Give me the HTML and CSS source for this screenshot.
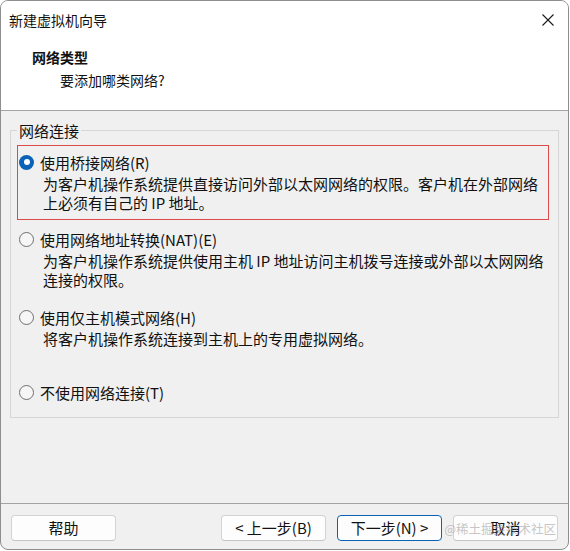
FILE: index.html
```html
<!DOCTYPE html>
<html lang="zh-CN">
<head>
<meta charset="utf-8">
<title>新建虚拟机向导</title>
<link rel="stylesheet" href="styles.css">
</head>
<body>
<div class="window">
  <div class="titlebar">
    <span class="title">新建虚拟机向导</span>
    <span class="close" aria-label="关闭"><svg width="12" height="12" viewBox="0 0 12 12"><path d="M0.5 0.5 L11.5 11.5 M11.5 0.5 L0.5 11.5" stroke="#1c1c1c" stroke-width="1.1" fill="none"/></svg></span>
  </div>
  <div class="header">
    <div class="heading">网络类型</div>
    <div class="subheading">要添加哪类网络?</div>
  </div>
  <div class="main">
    <fieldset class="group">
      <legend>网络连接</legend>
      <div class="option highlighted">
        <div class="label"><span class="radio checked"></span>使用桥接网络(R)</div>
        <div class="desc">为客户机操作系统提供直接访问外部以太网网络的权限。客户机在外部网络<br>上必须有自己的 IP 地址。</div>
      </div>
      <div class="option">
        <div class="label"><span class="radio"></span>使用网络地址转换(NAT)(E)</div>
        <div class="desc">为客户机操作系统提供使用主机 IP 地址访问主机拨号连接或外部以太网网络<br>连接的权限。</div>
      </div>
      <div class="option">
        <div class="label"><span class="radio"></span>使用仅主机模式网络(H)</div>
        <div class="desc">将客户机操作系统连接到主机上的专用虚拟网络。</div>
      </div>
      <div class="option spaced">
        <div class="label"><span class="radio"></span>不使用网络连接(T)</div>
      </div>
    </fieldset>
  </div>
  <div class="footer">
    <button class="btn">帮助</button>
    <div class="spacer"></div>
    <button class="btn">&lt; 上一步(B)</button>
    <button class="btn default">下一步(N) &gt;</button>
    <button class="btn">取消</button>
    <span class="watermark">@稀土掘金技术社区</span>
  </div>
</div>
</body>
</html>
```

FILE: styles.css
```css
html, body {
  margin: 0;
  padding: 0;
  background: #ffffff;
}

body {
  font-family: "Noto Sans CJK SC", "Liberation Sans", sans-serif;
  color: #111111;
}

.window {
  width: 569px;
  height: 550px;
  box-sizing: border-box;
  border: 1px solid #8e8e8e;
  border-radius: 8px;
  overflow: hidden;
  background: #f0f0f0;
  display: flex;
  flex-direction: column;
  position: relative;
}

.titlebar {
  height: 38px;
  background: #ffffff;
  display: flex;
  align-items: center;
  justify-content: space-between;
  padding: 0 14px 0 8px;
}

.title {
  font-size: 14px;
  line-height: 20px;
}

.close {
  display: flex;
  width: 12px;
  height: 12px;
}

.header {
  background: #ffffff;
  padding: 8px 0 20px 31px;
  border-bottom: 1px solid #a3a3a3;
}

.heading {
  font-size: 14px;
  font-weight: bold;
  line-height: 20px;
}

.subheading {
  font-size: 14px;
  line-height: 20px;
  margin-top: 3px;
  padding-left: 28px;
}

.main {
  flex: 1;
  padding: 10px 9px 0 9px;
}

.group {
  margin: 0;
  padding: 6.5px 11px 9px 8px;
  border: 1px solid #d6d6d6;
  min-width: 0;
}

.group legend {
  font-size: 15px;
  line-height: 19px;
  padding: 0 2px;
  margin-left: -2px;
}

.option {
  padding: 6px 0;
  font-size: 15px;
}

.option + .option {
  margin-top: 6.5px;
}

.option.spaced {
  margin-top: 23px;
}

.option.highlighted {
  outline: 1px solid #dc4a4a;
  outline-offset: 1px;
}

.label {
  display: flex;
  align-items: center;
  gap: 6px;
  line-height: 19px;
}

.radio {
  width: 15px;
  height: 15px;
  box-sizing: border-box;
  border-radius: 50%;
  border: 1px solid #6f6f6f;
  background: #f6f6f6;
  flex: none;
  position: relative;
}

.radio.checked {
  border: none;
  background: #0a63b6;
}

.radio.checked::after {
  content: "";
  position: absolute;
  left: 4.5px;
  top: 4.5px;
  width: 6px;
  height: 6px;
  border-radius: 50%;
  background: #ffffff;
}

.desc {
  margin-top: 2px;
  padding-left: 24px;
  line-height: 19px;
}

.footer {
  border-top: 1px solid #a3a3a3;
  padding: 11px 10px 8px 10px;
  display: flex;
  gap: 11px;
  position: relative;
}

.spacer {
  flex: 1;
}

.btn {
  width: 105px;
  height: 26px;
  box-sizing: border-box;
  background: #fdfdfd;
  border: 1px solid #d3d3d3;
  border-bottom-color: #c4c4c4;
  border-radius: 4px;
  font-family: "Noto Sans CJK SC", "Liberation Sans", sans-serif;
  font-size: 15px;
  line-height: 20px;
  color: #111111;
  padding: 0;
}

.btn.default {
  border-color: #0a63b6;
}

.watermark {
  position: absolute;
  right: 12px;
  top: 16px;
  font-size: 12.5px;
  line-height: 18px;
  color: rgba(150, 150, 150, 0.55);
  pointer-events: none;
}
```
